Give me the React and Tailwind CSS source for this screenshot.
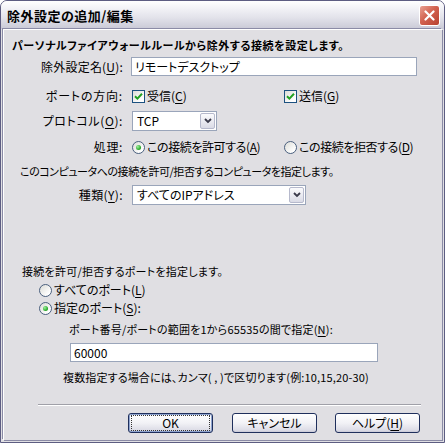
import React from "react";

const font = "font-['Noto_Sans_CJK_JP','Noto_Sans',sans-serif] [font-feature-settings:'palt']";

// underlined access key
const Mn = ({ children }) => <span className="underline underline-offset-2">{children}</span>;

const Checkbox = () => (
  <span className="flex h-[13px] w-[13px] shrink-0 items-center justify-center border border-[#1c5180] bg-[linear-gradient(135deg,#dcdcd7_0%,#ffffff_80%)]">
    <svg width="9" height="9" viewBox="0 0 9 9">
      <path d="M1 4.2 L3.4 6.6 L8 1.8" fill="none" stroke="#21a121" strokeWidth="2" />
    </svg>
  </span>
);

const Radio = ({ on }) => (
  <span className="flex h-[13px] w-[13px] shrink-0 items-center justify-center rounded-full border border-[#4a5f7e] bg-[linear-gradient(135deg,#dcdcd7_0%,#ffffff_80%)]">
    {on && <span className="h-[5px] w-[5px] rounded-full bg-[radial-gradient(circle_at_35%_35%,#9ef29e_0%,#21a121_70%)]" />}
  </span>
);

const Select = ({ value, width }) => (
  <div className={`flex h-[20px] items-center border border-[#9aa5ba] bg-white ${width}`}>
    <span className="flex-1 pl-[4px] text-[12px] leading-none">{value}</span>
    <span className="mr-[1px] flex h-[16px] w-[15px] items-center justify-center rounded-[2px] border border-[#b6b9cc] bg-[linear-gradient(to_bottom,#fbfbfd_0%,#dadbe6_100%)]">
      <svg width="8" height="6" viewBox="0 0 8 6">
        <path d="M1 1 L4 4 L7 1" fill="none" stroke="#3a3a4a" strokeWidth="1.8" />
      </svg>
    </span>
  </div>
);

const Button = ({ children, primary }) => (
  <button className={`flex h-[20px] w-[85px] items-center justify-center rounded-[3px] border border-[#1f2f5c] bg-[linear-gradient(to_bottom,#ffffff_0%,#f2f2f6_50%,#dcdce6_90%,#c8c8d6_100%)] text-[12px] leading-none ${primary ? "shadow-[inset_0_0_0_1px_#8fa4cf]" : ""}`}>
    <span className={`flex h-[14px] w-[77px] items-center justify-center ${primary ? "outline outline-1 outline-dotted outline-[#333]" : ""}`}>
      {children}
    </span>
  </button>
);

export default function App() {
  return (
    <div className={`${font} h-[443px] w-[445px] bg-white text-black`}>
      <div className="flex h-[443px] w-[445px] flex-col overflow-hidden rounded-t-[7px] border border-[#5d5d82] bg-[#e0dfe3]">
        {/* title bar */}
        <div className="flex h-[28px] shrink-0 items-center justify-between bg-[linear-gradient(to_bottom,#ffffff_0%,#f3f3f7_25%,#e2e2ea_60%,#c9c9d6_100%)] pl-[6px] pr-[4px]">
          <span className="text-[13px] font-bold leading-none tracking-[0.5px]">除外設定の追加/編集</span>
          <span className="flex h-[21px] w-[21px] items-center justify-center rounded-[3px] border border-white bg-[linear-gradient(135deg,#e9a192_0%,#d2624f_45%,#b8402f_100%)]">
            <svg width="11" height="11" viewBox="0 0 11 11">
              <path d="M1.5 1.5 L9.5 9.5 M9.5 1.5 L1.5 9.5" stroke="#fff" strokeWidth="2.2" strokeLinecap="round" />
            </svg>
          </span>
        </div>

        {/* client area */}
        <div className="mx-[2px] mb-[2px] flex flex-1 flex-col border-l border-t border-white shadow-[-1px_-1px_0_#8b8ba6,1px_1px_0_#8b8ba6] text-[12px] leading-none">
          <div className="mt-[3px] flex h-[24px] items-center pl-[8px] text-[11px] font-bold tracking-[0.55px]">
            パーソナルファイアウォールルールから除外する接続を設定します。
          </div>

          <div className="flex h-[19px] items-center">
            <span className="w-[119px] text-right tracking-[0.2px]">除外設定名(<Mn>U</Mn>):</span>
            <div className="ml-[8px] flex h-[19px] w-[286px] items-center border border-[#9aa5ba] bg-white pl-[3px]">
              リモートデスクトップ
            </div>
          </div>

          <div className="mt-[13px] flex h-[14px] items-center">
            <span className="w-[119px] text-right tracking-[0.8px]">ポートの方向:</span>
            <div className="ml-[9px] flex w-[152px] items-center gap-[2px]">
              <Checkbox />
              <span>受信(<Mn>C</Mn>)</span>
            </div>
            <div className="flex items-center gap-[2px]">
              <Checkbox />
              <span>送信(<Mn>G</Mn>)</span>
            </div>
          </div>

          <div className="mt-[8px] flex h-[20px] items-center">
            <span className="w-[119px] text-right tracking-[0.6px]">プロトコル(<Mn>O</Mn>):</span>
            <div className="ml-[9px]">
              <Select value="TCP" width="w-[85px]" />
            </div>
          </div>

          <div className="mt-[9px] flex h-[14px] items-center">
            <span className="w-[119px] text-right tracking-[0.6px]">処理:</span>
            <div className="ml-[9px] flex w-[152px] items-center gap-[2px] tracking-[-0.4px]">
              <Radio on />
              <span>この接続を許可する(<Mn>A</Mn>)</span>
            </div>
            <div className="flex items-center gap-[2px] tracking-[-0.4px]">
              <Radio />
              <span>この接続を拒否する(<Mn>D</Mn>)</span>
            </div>
          </div>

          <div className="mt-[9px] flex h-[16px] items-center pl-[16px] text-[11px] tracking-[-0.45px]">
            このコンピュータへの接続を許可/拒否するコンピュータを指定します。
          </div>

          <div className="mt-[6px] flex h-[20px] items-center">
            <span className="w-[119px] text-right tracking-[0.4px]">種類(<Mn>Y</Mn>):</span>
            <div className="ml-[9px]">
              <Select value="すべてのIPアドレス" width="w-[174px]" />
            </div>
          </div>

          <div className="mt-[58px] flex h-[16px] items-center pl-[18px] text-[11px] tracking-[0.25px]">
            接続を許可/拒否するポートを指定します。
          </div>

          <div className="mt-[4px] flex h-[14px] items-center gap-[2px] pl-[35px]">
            <Radio />
            <span>すべてのポート(<Mn>L</Mn>)</span>
          </div>

          <div className="mt-[4px] flex h-[14px] items-center gap-[2px] pl-[35px]">
            <Radio on />
            <span>指定のポート(<Mn>S</Mn>):</span>
          </div>

          <div className="mt-[6px] flex h-[16px] items-center pl-[65px] text-[11px] tracking-[0.2px]">
            ポート番号/ポートの範囲を1から65535の間で指定(<Mn>N</Mn>):
          </div>

          <div className="mt-[6px] flex h-[19px] items-center pl-[66px]">
            <div className="flex h-[19px] w-[308px] items-center border border-[#9aa5ba] bg-white pl-[3px]">60000</div>
          </div>

          <div className="mt-[7px] flex h-[16px] items-center pl-[59px] text-[11px] tracking-[0.15px]">
            複数指定する場合には、カンマ( , )で区切ります(例:10,15,20-30)
          </div>

          <div className="ml-[34px] mt-[19px] h-[2px] w-[383px] border-t border-b border-t-[#a0a0a8] border-b-white" />

          <div className="mt-[7px] flex items-center gap-[19px] pl-[124px]">
            <Button primary>OK</Button>
            <Button>キャンセル</Button>
            <div className="-ml-[1px]">
              <Button>ヘルプ(<Mn>H</Mn>)</Button>
            </div>
          </div>
        </div>
      </div>
    </div>
  );
}
